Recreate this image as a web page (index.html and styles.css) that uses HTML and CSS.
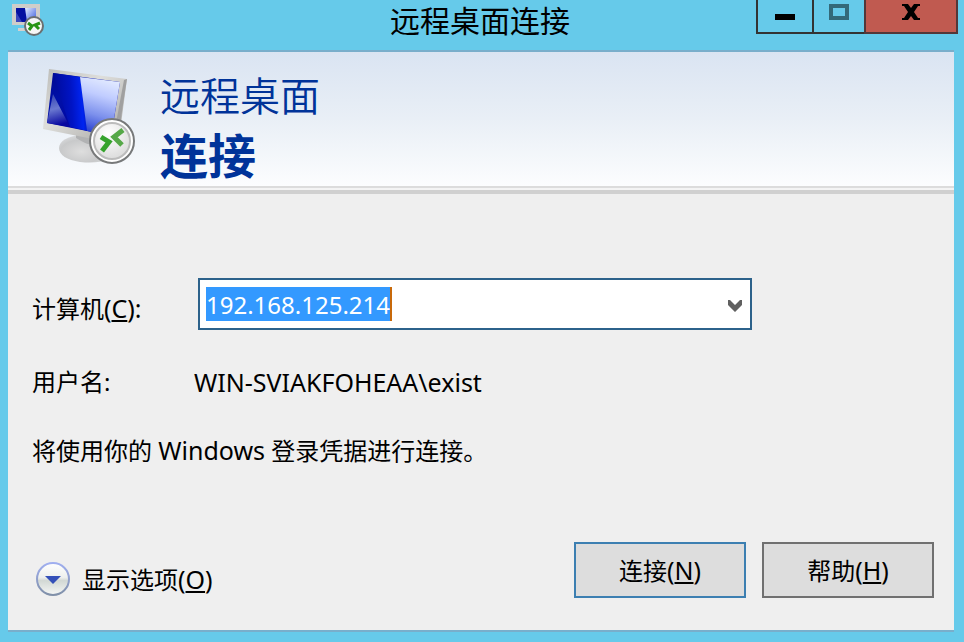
FILE: index.html
```
<!DOCTYPE html>
<html lang="zh-CN">
<head>
<meta charset="utf-8">
<meta name="viewport" content="width=device-width, initial-scale=1">
<title>远程桌面连接</title>
<link rel="stylesheet" href="styles.css">
</head>
<body>
<main class="window">
  <header class="titlebar">
    <svg class="titlebar-icon" viewBox="0 0 32 32" aria-hidden="true">
      <defs>
        <linearGradient id="miniScreen" x1="0" y1="0" x2="1" y2="1">
          <stop offset="0" stop-color="#e6efff"/>
          <stop offset="1" stop-color="#3657dc"/>
        </linearGradient>
      </defs>
      <path d="M6 24h12v3H6z" fill="#d3d1ce"/>
      <path d="M0 0h28v21H0z" fill="#cfcdc9"/>
      <path d="M4 4h20v14H4z" fill="#0510a0"/>
      <path d="M13 4h11v14h-9z" fill="url(#miniScreen)"/>
      <path d="M4 8l6 10H4z" fill="#3a45bd"/>
      <circle cx="22" cy="22" r="9" fill="#f6f6f6" stroke="#6b6f70" stroke-width="2"/>
      <path d="M16 19l4 3-3 4M28 19l-5 2 4 4" fill="none" stroke="#279414" stroke-width="3"/>
    </svg>
    <h1 class="titlebar-text">远程桌面连接</h1>
    <div class="caption-buttons">
      <button class="caption minimize" type="button" aria-label="最小化">
        <svg viewBox="0 0 20 20" aria-hidden="true"><path d="M0 12h20v6H0z" fill="#000"/></svg>
      </button>
      <button class="caption maximize" type="button" aria-label="最大化" disabled>
        <svg viewBox="0 0 20 20" aria-hidden="true"><path d="M2 4h16v12H2z" fill="none" stroke="#336979" stroke-width="4"/></svg>
      </button>
      <button class="caption close" type="button" aria-label="关闭">
        <svg viewBox="0 0 20 20" aria-hidden="true"><path d="M1 2h6l3 4 3-4h6v2h-2l-4 6 4 6h2v2h-6l-3-4-3 4H1v-2h2l4-6-4-6H1z" fill="#000"/></svg>
      </button>
    </div>
  </header>

  <div class="client">
    <div class="banner">
      <svg class="banner-icon" viewBox="0 0 96 100" aria-hidden="true">
        <defs>
          <linearGradient id="frame" x1="0" y1="0" x2="1" y2="1">
            <stop offset="0" stop-color="#bcbcb8"/>
            <stop offset="0.4" stop-color="#dededb"/>
            <stop offset="1" stop-color="#a4a3a0"/>
          </linearGradient>
          <linearGradient id="screenDark" x1="0" y1="0" x2="0.7" y2="1">
            <stop offset="0" stop-color="#000890"/>
            <stop offset="0.35" stop-color="#0010a8"/>
            <stop offset="1" stop-color="#0000a0"/>
          </linearGradient>
          <linearGradient id="screenMid" x1="0" y1="0.3" x2="1" y2="0.2">
            <stop offset="0" stop-color="#000a98"/>
            <stop offset="0.5" stop-color="#0014c4"/>
            <stop offset="0.8" stop-color="#0024f0"/>
            <stop offset="1" stop-color="#0010b0"/>
          </linearGradient>
          <linearGradient id="screenLight" x1="0.5" y1="0" x2="0.3" y2="1">
            <stop offset="0" stop-color="#e2eaff"/>
            <stop offset="0.3" stop-color="#c0ccff"/>
            <stop offset="0.65" stop-color="#7c90ec"/>
            <stop offset="1" stop-color="#2038cc"/>
          </linearGradient>
          <linearGradient id="screenGlow" x1="0" y1="0" x2="0.2" y2="1">
            <stop offset="0" stop-color="#3040b0"/>
            <stop offset="0.5" stop-color="#6a78d0"/>
            <stop offset="1" stop-color="#0808a0"/>
          </linearGradient>
          <radialGradient id="stand" cx="0.45" cy="0.6" r="0.6">
            <stop offset="0" stop-color="#dedede"/>
            <stop offset="0.7" stop-color="#c8c9ca"/>
            <stop offset="1" stop-color="#d8dadc"/>
          </radialGradient>
          <radialGradient id="badge" cx="0.4" cy="0.3" r="0.8">
            <stop offset="0" stop-color="#ffffff"/>
            <stop offset="1" stop-color="#d8d8d8"/>
          </radialGradient>
        </defs>
        <path d="M17 80c0-7 9-12 22-13l28 4v20c-8 4-19 4-29 3-13-2-21-7-21-14z" fill="url(#stand)"/>
        <path d="M34 63l22 6-2 6c-7 4-14-2-20-5z" fill="#b1b2b3"/>
        <path d="M7 1l78 10-8 60-6 4L1 61z" fill="url(#frame)"/>
        <path d="M82 12l3-1-9 58-5 2z" fill="#a0a0a0"/>
        <path d="M11 5l67 9-8 49-5 4L5 55z" fill="url(#screenDark)"/>
        <path d="M11 5l27 4 8 54L28 59z" fill="url(#screenMid)"/>
        <path d="M11 26l17 33-23-4z" fill="url(#screenGlow)"/>
        <path d="M38 9l40 5-8 49-5 4-20-4z" fill="url(#screenLight)"/>
        <circle cx="70" cy="73" r="22" fill="#fff" stroke="#77797a" stroke-width="2"/>
        <circle cx="70" cy="73" r="18" fill="url(#badge)" stroke="#bcbcbc" stroke-width="2"/>
        <path d="M59 69l8 5-7 9" fill="none" stroke="#36a32c" stroke-width="5"/>
        <path d="M81 62l-9 7 8 8" fill="none" stroke="#56a848" stroke-width="5"/>
      </svg>
      <div class="banner-text">
        <p class="banner-product">远程桌面</p>
        <p class="banner-action">连接</p>
      </div>
    </div>

    <form class="form">
      <div class="fields">
        <label class="computer-label" for="computer">计算机<span class="latin">(<u>C</u>):</span></label>
        <div class="combo">
          <input class="combo-input" id="computer" type="text" value="192.168.125.214" size="15">
          <button class="combo-arrow" type="button" aria-label="显示列表">
            <svg viewBox="0 0 14 12" aria-hidden="true"><path d="M0 0h2l5 5 5-5h2v5l-7 7-7-7z" fill="#606060"/></svg>
          </button>
        </div>
        <span>用户名:</span>
        <span class="latin">WIN-SVIAKFOHEAA\exist</span>
        <p class="note">将使用你的 <span class="latin">Windows</span> 登录凭据进行连接。</p>
      </div>
      <div class="actions">
        <button class="options" type="button">
          <svg viewBox="0 0 34 34" aria-hidden="true">
            <defs>
              <linearGradient id="knob" x1="0" y1="0" x2="0" y2="1">
                <stop offset="0" stop-color="#ffffff"/>
                <stop offset="0.45" stop-color="#eef0ee"/>
                <stop offset="0.55" stop-color="#d2d8d4"/>
                <stop offset="1" stop-color="#f6f7f6"/>
              </linearGradient>
              <linearGradient id="knobRing" x1="0" y1="0" x2="0" y2="1">
                <stop offset="0" stop-color="#a0aff0"/>
                <stop offset="1" stop-color="#8090a8"/>
              </linearGradient>
            </defs>
            <circle cx="17" cy="17" r="16" fill="url(#knob)" stroke="url(#knobRing)" stroke-width="2"/>
            <path d="M9 14h16l-8 8z" fill="#3450b8"/>
          </svg>
          <span>显示选项<span class="latin">(<u>O</u>)</span></span>
        </button>
        <button class="push default" type="submit">连接<span class="latin">(<u>N</u>)</span></button>
        <button class="push" type="button">帮助<span class="latin">(<u>H</u>)</span></button>
      </div>
    </form>
  </div>
</main>
</body>
</html>
```
FILE: styles.css
```
* {
  box-sizing: border-box;
}

body {
  margin: 0;
  font-family: "Noto Sans", "Noto Sans CJK SC", sans-serif;
  font-size: 24px;
  line-height: 32px;
  color: #000;
}

h1,
p {
  margin: 0;
  font-weight: 400;
}

button,
input {
  margin: 0;
  padding: 0;
  border: 0;
  border-radius: 0;
  background: none;
  font: inherit;
  color: inherit;
}

u {
  text-decoration-thickness: 2px;
  text-underline-offset: 2px;
}

svg {
  display: block;
  flex: none;
}

/* Latin runs are set slightly larger to balance the Chinese glyphs */
.latin {
  font-size: 25px;
}

.window {
  display: flex;
  flex-direction: column;
  min-height: 100vh;
  padding: 0 10px 10px 8px;
  background: #66caea;
}

.titlebar {
  display: grid;
  grid-template-columns: 1fr auto 1fr;
  height: 50px;
  margin: 0 -4px 0 -6px;
}

.titlebar-icon {
  width: 32px;
  height: 32px;
  margin: 4px 0 0 10px;
}

.titlebar-text {
  font-size: 30px;
  line-height: 42px;
}

.caption-buttons {
  display: flex;
  justify-self: end;
  height: 34px;
}

.caption {
  display: flex;
  justify-content: center;
  width: 56px;
  padding-top: 2px;
  border: solid #333;
  border-width: 0 0 2px 2px;
}

.caption svg {
  width: 20px;
  height: 20px;
}

.maximize {
  width: 52px;
}

.close {
  width: 94px;
  border-color: #533739;
  border-right-width: 2px;
  background: #c05a50;
}

.client {
  display: flex;
  flex: 1;
  flex-direction: column;
  border: solid #79aecb;
  border-width: 2px 0;
  background: #efefef;
}

.banner {
  display: flex;
  gap: 22px;
  height: 134px;
  padding: 14px 34px 16px;
  background: linear-gradient(#dae4f2, #e9eff6 50%, #fcfdfe);
  box-shadow: 0 2px #dcdcdc, 0 4px #f4f4f4, 0 8px #d0d0d0;
}

.banner-icon {
  width: 96px;
  height: 100px;
  margin-top: 2px;
}

.banner-text {
  color: #039;
}

.banner-product {
  font-size: 40px;
  font-weight: 350;
  line-height: 60px;
}

.banner-action {
  font-size: 48px;
  font-weight: 700;
  line-height: 60px;
}

.form {
  display: flex;
  flex: 1;
  flex-direction: column;
  justify-content: space-between;
  padding: 92px 20px 32px 24px;
}

.fields {
  display: grid;
  grid-template-columns: 162px minmax(0, 558px);
  row-gap: 36px;
  align-items: center;
}

.computer-label {
  padding-top: 8px;
}

.combo {
  display: flex;
  align-items: center;
  justify-content: space-between;
  height: 52px;
  margin-left: 4px;
  padding: 0 8px 0 6px;
  border: 2px solid #2c628b;
  background: #fff;
}

.combo-input {
  field-sizing: content;
  height: 34px;
  border-right: 2px solid #c8690a;
  background: #39f;
  color: #fff;
}

.combo-arrow {
  padding-top: 4px;
}

.combo-arrow svg {
  width: 14px;
  height: 12px;
}

.note {
  grid-column: 1 / -1;
}

.actions {
  display: flex;
  align-items: center;
  gap: 16px;
}

.options {
  display: flex;
  align-items: center;
  gap: 12px;
  margin: 18px auto 0 4px;
}

.options svg {
  width: 34px;
  height: 34px;
}

.push {
  width: 172px;
  height: 56px;
  border: 2px solid #707070;
  background: #ddd;
}

.default {
  border-color: #3c7fb1;
}
```
